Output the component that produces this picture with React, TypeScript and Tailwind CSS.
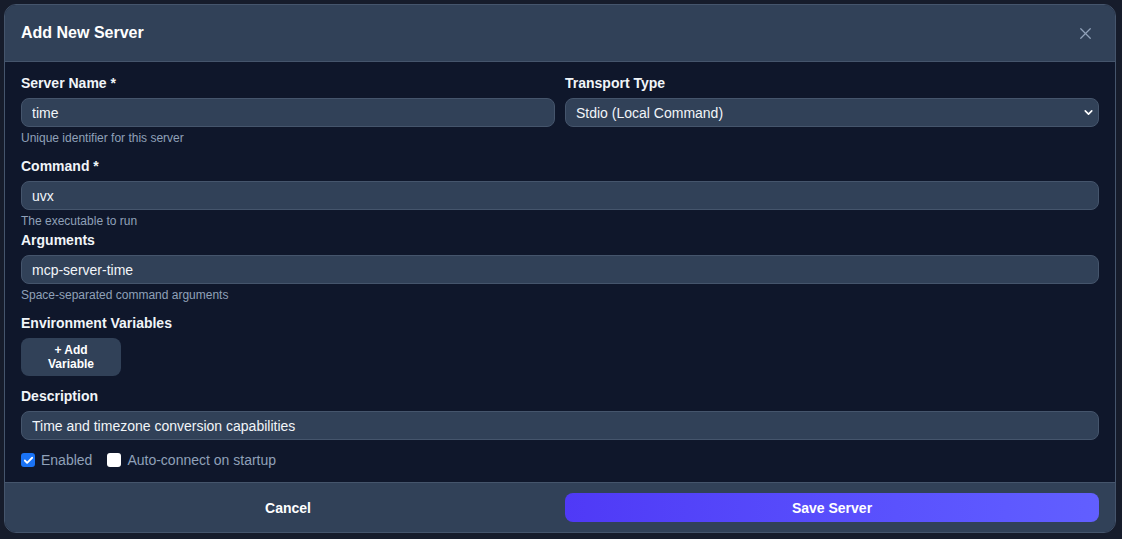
import { X, ChevronDown, Check } from 'lucide-react';

function Label({ children }: { children: React.ReactNode }) {
  return <label className="block text-sm font-bold leading-5 text-slate-100 mb-[5px]">{children}</label>;
}

function Hint({ children }: { children: React.ReactNode }) {
  return <p className="mt-[3px] text-xs leading-4 text-slate-400">{children}</p>;
}

function TextInput({ value }: { value: string }) {
  return (
    <input
      readOnly
      value={value}
      className="block w-full h-[29px] px-[10px] rounded-lg border border-slate-600 bg-slate-700 text-sm text-slate-100 outline-none"
    />
  );
}

export default function App() {
  return (
    <div className="min-h-[539px] w-full bg-[#161c2b] pl-1 pt-1 font-['Liberation_Sans','Arial',sans-serif]">
      <div className="w-[1112px] overflow-hidden rounded-xl border border-slate-600 bg-slate-900">
        {/* header */}
        <div className="flex items-center justify-between bg-slate-700 border-b border-slate-600 px-4 py-[14px]">
          <h2 className="text-base font-bold leading-7 text-white">Add New Server</h2>
          <button className="mr-1 text-slate-400">
            <X size={19} strokeWidth={1.6} />
          </button>
        </div>

        {/* body */}
        <div className="px-4 pt-[11px] pb-3">
          <div className="grid grid-cols-2 gap-x-2.5">
            <div>
              <Label>Server Name *</Label>
              <TextInput value="time" />
              <Hint>Unique identifier for this server</Hint>
            </div>
            <div>
              <Label>Transport Type</Label>
              <div className="relative">
                <select className="block w-full h-[29px] appearance-none pl-[10px] pr-8 rounded-lg border border-slate-600 bg-slate-700 text-sm text-slate-100 outline-none">
                  <option>Stdio (Local Command)</option>
                </select>
                <ChevronDown size={13} strokeWidth={3} className="pointer-events-none absolute right-[4px] top-[8px] text-white" />
              </div>
            </div>
          </div>

          <div className="mt-2.5">
            <Label>Command *</Label>
            <TextInput value="uvx" />
            <Hint>The executable to run</Hint>
          </div>

          <div className="mt-px">
            <Label>Arguments</Label>
            <TextInput value="mcp-server-time" />
            <Hint>Space-separated command arguments</Hint>
          </div>

          <div className="mt-2.5">
            <Label>Environment Variables</Label>
            <button className="w-[100px] rounded-lg bg-slate-700 py-[5px] text-xs font-bold leading-[14px] text-white">
              <span className="block">+ Add</span>
              <span className="block">Variable</span>
            </button>
          </div>

          <div className="mt-2.5">
            <Label>Description</Label>
            <TextInput value="Time and timezone conversion capabilities" />
          </div>

          <div className="mt-2.5 flex items-center gap-[15px] text-sm leading-5 text-slate-400">
            <label className="flex items-center gap-1.5">
              <span className="flex h-[14px] w-[14px] items-center justify-center rounded-[3px] bg-[#1a73f5]">
                <Check size={11} strokeWidth={4} className="text-white" />
              </span>
              Enabled
            </label>
            <label className="flex items-center gap-1.5">
              <span className="h-[14px] w-[14px] rounded-[3px] bg-white" />
              Auto-connect on startup
            </label>
          </div>
        </div>

        {/* footer */}
        <div className="grid grid-cols-2 gap-x-2.5 border-t border-slate-600 bg-slate-700 px-4 py-2.5">
          <button className="h-[29px] rounded-lg text-sm font-bold text-white">Cancel</button>
          <button className="h-[29px] rounded-lg bg-gradient-to-r from-indigo-600 to-indigo-500 text-sm font-bold text-white">
            Save Server
          </button>
        </div>
      </div>
    </div>
  );
}
